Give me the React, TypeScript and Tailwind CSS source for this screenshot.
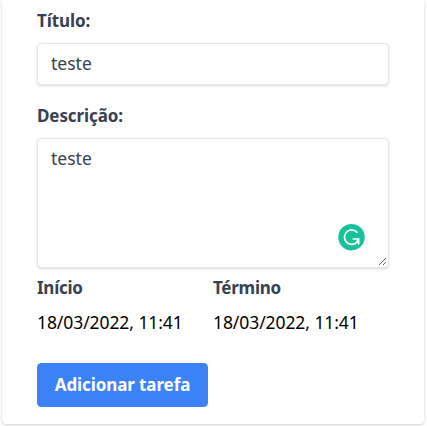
import React from "react";

const labelClass = "block h-[26px] text-[17px] leading-[25px] font-bold tracking-[-0.1px] text-[#374151]";
const fieldClass =
  "block w-full resize-none rounded-[4.4px] border border-[#e5e7eb] bg-white px-[13px] text-[17.5px] text-[#374151] shadow-[0_1px_3px_rgba(0,0,0,0.1),0_1px_2px_rgba(0,0,0,0.06)] outline-none";

function DateColumn({ title, value }: { title: string; value: string }) {
  return (
    <div className="w-1/2 whitespace-nowrap">
      <span className={labelClass}>
        <span className="tracking-[-0.25px]">{title}</span>
      </span>
      <p className="mt-[9px] h-[26px] text-[17.5px] leading-[25px] tracking-[-0.08px] text-black">{value}</p>
    </div>
  );
}

function AssistantBadge() {
  return (
    <svg className="absolute left-[301px] top-[86px] h-[27px] w-[27px]" viewBox="0 0 27 27" aria-hidden="true">
      <circle cx="13.5" cy="13.2" r="13.2" fill="#15c39a" />
      <path
        d="M19.4 8.8A7.2 7.2 0 1 0 18.6 18.4L20.3 15.2M14.6 15H20.6V20.6"
        fill="none"
        stroke="white"
        strokeWidth="1.7"
      />
    </svg>
  );
}

export default function App() {
  return (
    <div className="h-[426px] w-[427px] overflow-hidden bg-white font-['Noto_Sans',sans-serif]">
      <form
        onSubmit={(e) => e.preventDefault()}
        className="ml-[2px] h-[424px] w-[422px] rounded-b-[4.4px] bg-white px-[35px] pt-[8px] shadow-[0_1px_4px_rgba(0,0,0,0.12),0_1px_2px_rgba(0,0,0,0.08)]"
      >
        <label htmlFor="title" className={labelClass}>Título:</label>
        <input id="title" defaultValue="teste" className={`${fieldClass} mt-[9px] h-[42px] pb-[3px]`} />
        <label htmlFor="description" className={`${labelClass} mt-[18px]`}>Descrição:</label>
        <div className="relative mt-[9px]">
          <textarea
            id="description"
            defaultValue="teste"
            className={`${fieldClass} h-[130px] py-[7px] leading-[25px]`}
          />
          <AssistantBadge />
          <svg className="absolute right-[2px] bottom-[2px] h-[9px] w-[9px]" viewBox="0 0 9 9" aria-hidden="true">
            <path d="M1 8L8 1M5 8L8 5" stroke="#555" strokeWidth="0.9" />
          </svg>
        </div>
        <div className="mt-[7px] flex">
          <DateColumn title="Início" value="18/03/2022, 11:41" />
          <DateColumn title="Término" value="18/03/2022, 11:41" />
        </div>
        <button className="mt-[27px] flex h-[44px] w-[171px] items-center justify-center rounded-[4.4px] bg-[#3b82f6] pb-px text-[17px] font-bold tracking-[-0.1px] whitespace-nowrap text-white">
          Adicionar tarefa
        </button>
      </form>
    </div>
  );
}
